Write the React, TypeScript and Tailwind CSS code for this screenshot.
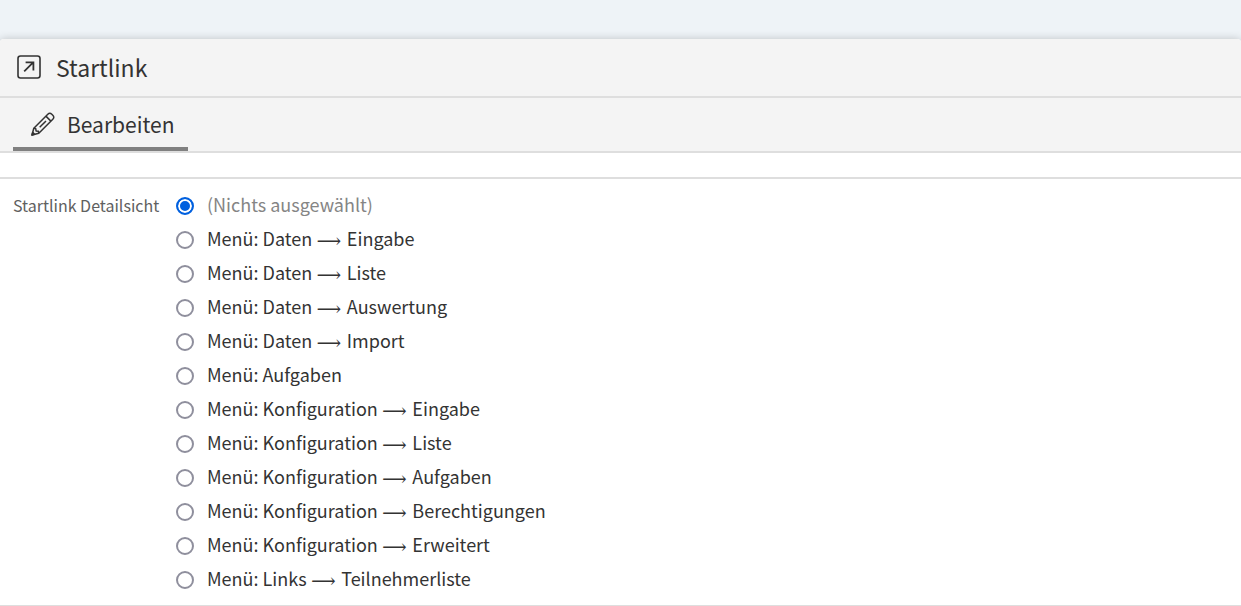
import { useState } from 'react';

const options: string[][] = [
  ['(Nichts ausgewählt)'],
  ['Menü: Daten', 'Eingabe'],
  ['Menü: Daten', 'Liste'],
  ['Menü: Daten', 'Auswertung'],
  ['Menü: Daten', 'Import'],
  ['Menü: Aufgaben'],
  ['Menü: Konfiguration', 'Eingabe'],
  ['Menü: Konfiguration', 'Liste'],
  ['Menü: Konfiguration', 'Aufgaben'],
  ['Menü: Konfiguration', 'Berechtigungen'],
  ['Menü: Konfiguration', 'Erweitert'],
  ['Menü: Links', 'Teilnehmerliste'],
];

function LinkIcon() {
  return (
    <svg className="size-6 shrink-0" viewBox="0 0 24 24" fill="none" stroke="currentColor" aria-hidden="true">
      <rect x="1" y="1" width="22" height="22" rx="2.5" strokeWidth="1.6" />
      <path d="M7.2 16.3 16.2 7.4M8.6 7.4h7.8v8" strokeWidth="1.8" />
    </svg>
  );
}

function PencilIcon() {
  return (
    <svg className="size-6 shrink-0" viewBox="0 0 24 24" fill="none" stroke="currentColor" strokeWidth="1.5" strokeLinejoin="round" aria-hidden="true">
      <path d="M1 23 2.8 16.2 16.8 2.2Q18.8 .2 20.8 2.2L21.8 3.2Q23.8 5.2 21.8 7.2L7.8 21.2Z" />
      <path d="M2.8 16.2 4.7 16.5 5.1 18.9 7.5 19.3 7.8 21.2M14.9 4.1 19.9 9.1M8.7 15.3 15 9" />
      <path d="M1 23 1.7 20.4 3.6 22.3Z" fill="currentColor" />
    </svg>
  );
}

export default function App() {
  const [selected, setSelected] = useState(0);

  return (
    <div className="min-h-screen bg-[#eef3f7] pt-[39px] font-['Noto_Sans_CJK_SC','Noto_Sans',sans-serif] text-[#333333]">
      <main className="rounded-t-sm bg-white shadow-[0_0_8px_rgba(0,0,0,0.2)]">
        <header className="flex h-[59px] items-center gap-[15px] rounded-t-sm border-b-2 border-[#dedede] bg-[#f4f4f4] px-[17px] pb-0.5">
          <LinkIcon />
          <h1 className="text-[23px] leading-8">Startlink</h1>
        </header>
        <nav className="flex h-[55px] border-b-2 border-[#dedede] bg-[#f4f4f4] px-[13px]">
          <a href="#bearbeiten" aria-current="page" className="flex items-center gap-3 border-b-4 border-[#808080] pr-[13px] pl-[18px] pt-[3px] text-[21px] leading-7">
            <PencilIcon />
            Bearbeiten
          </a>
        </nav>
        <div className="h-[26px] border-b-2 border-[#dedede]" />
        <form className="flex border-b border-[#dedede] px-[13px] pt-[10px] pb-2">
          <div id="startlink-label" className="w-[163px] shrink-0 text-base leading-8 text-[#606060]">
            Startlink Detailsicht
          </div>
          <div role="radiogroup" aria-labelledby="startlink-label" className="flex flex-col">
            {options.map(([menu, target], index) => (
              <label key={index} className={`flex h-[34px] items-center gap-[13px] text-lg ${index === 0 ? 'text-[#858585]' : 'text-[#333333]'}`}>
                <input
                  type="radio"
                  name="startlink"
                  checked={selected === index}
                  onChange={() => setSelected(index)}
                  className="size-[18px] shrink-0 appearance-none rounded-full border-2 border-[#8f8f9d] bg-white checked:border-[#0060df] checked:bg-[#0060df] checked:shadow-[inset_0_0_0_2px_#ffffff]"
                />
                <span className="whitespace-pre pb-1">
                  {menu}
                  {target && (
                    <>
                      {' '}
                      <span className="mr-px font-['DejaVu_Math_TeX_Gyre','DejaVu_Sans',sans-serif] leading-none">⟶</span>
                      {' '}
                      {target}
                    </>
                  )}
                </span>
              </label>
            ))}
          </div>
        </form>
      </main>
    </div>
  );
}
